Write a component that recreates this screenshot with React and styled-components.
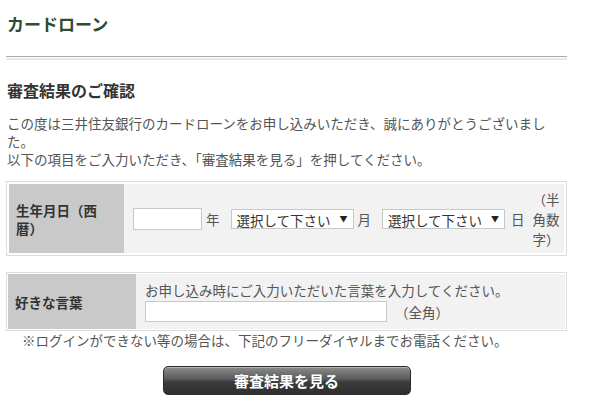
import React from 'react'
import styled, { createGlobalStyle } from 'styled-components'

const Global = createGlobalStyle`
    body {
        margin: 0;
        background: #fff;
        font-family: "Noto Sans CJK JP", "Noto Sans", sans-serif;
        color: #555;
    }
`

const Page = styled.div`
    width: 561px;
    padding: 0 0 0 6px;
`

const Title = styled.h1`
    margin: 12px 0 0 1px;
    font-size: 17px;
    line-height: 24px;
    font-weight: bold;
    color: #2e4c2e;
`

const Rule = styled.div`
    margin-top: 20px;
    height: 1px;
    border-top: 1px solid #a9a9a9;
    border-bottom: 2px solid #e8e8e8;
`

const Heading = styled.h2`
    margin: 19px 0 0 1px;
    font-size: 16px;
    line-height: 22px;
    font-weight: bold;
    color: #333;
`

const Lead = styled.p`
    margin: 13px 0 0 1px;
    font-size: 13.5px;
    line-height: 18px;
    color: #555;
`

const Box = styled.div`
    margin-top: ${p => p.$top}px;
    border: 1px solid #dcdcdc;
    padding: ${p => p.$pad}px;
    background: #fff;
`

const Row = styled.div`
    display: flex;
    height: ${p => p.$h}px;
    background: #f2f2f2;
`

const Label = styled.div`
    width: ${p => p.$w}px;
    flex: none;
    box-sizing: border-box;
    padding: 0 7px;
    display: flex;
    align-items: center;
    background: #c9c9c9;
    color: #333;
    font-size: 13.5px;
    line-height: 18px;
    font-weight: bold;
`

const Cell = styled.div`
    flex: 1;
    display: flex;
    flex-direction: ${p => (p.$column ? 'column' : 'row')};
    justify-content: center;
    align-items: ${p => (p.$column ? 'flex-start' : 'center')};
    padding: 0 9px;
    font-size: 13.5px;
    color: #555;
`

const TextInput = styled.input`
    width: ${p => p.$w}px;
    height: ${p => p.$h}px;
    box-sizing: border-box;
    border: 1px solid #c8c8c8;
    background: #fff;
    padding: 0 3px;
    margin: 0;
    font-size: 13.5px;
`

const Unit = styled.span`
    margin: 0 ${p => p.$after}px 0 ${p => p.$before}px;
    font-size: 13.5px;
    line-height: 18px;
    color: #555;
`

const SelectWrap = styled.div`
    position: relative;
    width: 123px;
    height: 20px;
`

const Select = styled.select`
    appearance: none;
    width: 100%;
    height: 100%;
    box-sizing: border-box;
    margin: 0;
    padding: 0 0 0 5px;
    border: 1px solid #c8c8c8;
    background: #fff;
    font-family: "Noto Sans CJK JP", sans-serif;
    font-size: 13.5px;
    color: #333;
`

const Arrow = styled.span`
    position: absolute;
    right: 6px;
    top: 3px;
    font-size: 8px;
    line-height: 14px;
    color: #222;
    pointer-events: none;
`

const Note = styled.span`
    width: 28px;
    margin-left: 2px;
    font-size: 13.5px;
    line-height: 20px;
    color: #555;
`

const Hint = styled.div`
    font-size: 13.5px;
    line-height: 18px;
    margin-bottom: 2px;
`

const InputLine = styled.div`
    display: flex;
    align-items: center;
`

const Caution = styled.p`
    margin: 0;
    padding-left: 16px;
    font-size: 13.5px;
    line-height: 18px;
    color: #555;
`

const Actions = styled.div`
    display: flex;
    justify-content: center;
    margin-top: 17px;
`

const Submit = styled.button`
    width: 248px;
    height: 29px;
    border: 1px solid #2c2c2c;
    border-radius: 5px;
    background: linear-gradient(#8c8c8c 0%, #5a5a5a 45%, #3c3c3c 55%, #2e2e2e 100%);
    box-shadow: inset 0 1px 0 rgba(255,255,255,0.35);
    color: #fff;
    font-family: "Noto Sans CJK JP", sans-serif;
    font-size: 15px;
    font-weight: bold;
    padding: 0;
`

const DateSelect = () => (
    <SelectWrap>
        <Select defaultValue="">
            <option value="">選択して下さい</option>
        </Select>
        <Arrow>▼</Arrow>
    </SelectWrap>
)

const App = () => {
    return (
        <Page>
            <Global />
            <Title>カードローン</Title>
            <Rule />
            <Heading>審査結果のご確認</Heading>
            <Lead>
                この度は三井住友銀行のカードローンをお申し込みいただき、誠にありがとうございました。<br />
                以下の項目をご入力いただき、「審査結果を見る」を押してください。
            </Lead>

            <Box $top={13} $pad={2}>
                <Row $h={69}>
                    <Label $w={115}>生年月日（西暦）</Label>
                    <Cell>
                        <TextInput $w={69} $h={22} />
                        <Unit $before={4} $after={11}>年</Unit>
                        <DateSelect />
                        <Unit $before={4} $after={11}>月</Unit>
                        <DateSelect />
                        <Unit $before={6} $after={6}>日</Unit>
                        <Note>（半角数字）</Note>
                    </Cell>
                </Row>
            </Box>

            <Box $top={16} $pad={1}>
                <Row $h={55}>
                    <Label $w={128}>好きな言葉</Label>
                    <Cell $column>
                        <Hint>お申し込み時にご入力いただいた言葉を入力してください。</Hint>
                        <InputLine>
                            <TextInput $w={242} $h={21} />
                            <Unit $before={8} $after={0}>（全角）</Unit>
                        </InputLine>
                    </Cell>
                </Row>
            </Box>
            <Caution>※ログインができない等の場合は、下記のフリーダイヤルまでお電話ください。</Caution>

            <Actions>
                <Submit>審査結果を見る</Submit>
            </Actions>
        </Page>
    )
}

export default App
